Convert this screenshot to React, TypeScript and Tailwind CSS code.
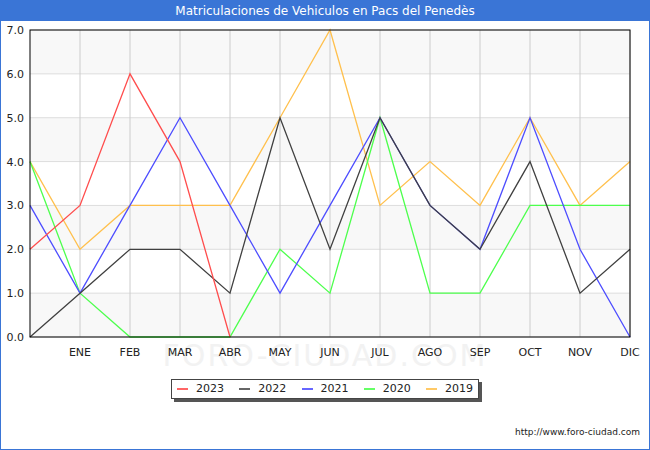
const months = ["ENE", "FEB", "MAR", "ABR", "MAY", "JUN", "JUL", "AGO", "SEP", "OCT", "NOV", "DIC"];

const series = [
  { name: "2019", color: "#ffc04d", data: [4, 2, 3, 3, 3, 5, 7, 3, 4, 3, 5, 3, 4] },
  { name: "2020", color: "#4dff4d", data: [4, 1, 0, 0, 0, 2, 1, 5, 1, 1, 3, 3, 3] },
  { name: "2021", color: "#4d4dff", data: [3, 1, 3, 5, 3, 1, 3, 5, 3, 2, 5, 2, 0] },
  { name: "2022", color: "#404040", data: [0, 1, 2, 2, 1, 5, 2, 5, 3, 2, 4, 1, 2] },
  { name: "2023", color: "#ff4d4d", data: [2, 3, 6, 4, 0] },
];

const legend = [
  { name: "2023", color: "#ff6666" },
  { name: "2022", color: "#666666" },
  { name: "2021", color: "#6666ff" },
  { name: "2020", color: "#66ff66" },
  { name: "2019", color: "#ffc966" },
];

const X0 = 30, X1 = 630, Y0 = 30, Y1 = 337;
const sx = (i: number) => X0 + i * 50;
const sy = (v: number) => Y1 - (v * (Y1 - Y0)) / 7;

function Chart() {
  return (
    <svg width="650" height="372" className="absolute left-0 top-0" style={{ fontFamily: "DejaVu Sans, sans-serif" }}>
      {[0, 1, 2, 3, 4, 5, 6].map((k) =>
        k % 2 === 0 ? (
          <rect key={k} x={X0} y={sy(7 - k)} width={X1 - X0} height={(Y1 - Y0) / 7} fill="#f8f8f8" />
        ) : null
      )}
      <text x="325" y="366" fontSize="30" textAnchor="middle" fill="#f2f2f2" letterSpacing="2">FORO-CIUDAD.COM</text>
      {[0, 1, 2, 3, 4, 5, 6, 7].map((v) => (
        <g key={v}>
          <line x1={X0} x2={X1} y1={sy(v)} y2={sy(v)} stroke="#dddddd" />
          <text x={24} y={sy(v) + 4} fontSize="11" textAnchor="end" fill="#222">{v.toFixed(1)}</text>
        </g>
      ))}
      {months.map((m, i) => (
        <g key={m}>
          <line x1={sx(i + 1)} x2={sx(i + 1)} y1={Y0} y2={Y1} stroke="#cccccc" />
          <text x={sx(i + 1)} y={356} fontSize="11" textAnchor="middle" fill="#222">{m}</text>
        </g>
      ))}
      {series.map((s) => (
        <polyline
          key={s.name}
          fill="none"
          stroke={s.color}
          strokeWidth="1.3"
          points={s.data.map((v, i) => `${sx(i)},${sy(v)}`).join(" ")}
        />
      ))}
      <rect x={X0} y={Y0} width={X1 - X0} height={Y1 - Y0} fill="none" stroke="#000" />
    </svg>
  );
}

export default function App() {
  return (
    <div className="w-[650px] h-[450px] bg-white border border-[#3a75d6] flex flex-col" style={{ fontFamily: "DejaVu Sans, sans-serif" }}>
      <div className="h-[20px] bg-[#3a75d6] text-white text-[12px] flex items-center justify-center">
        Matriculaciones de Vehiculos en Pacs del Penedès
      </div>
      <div className="relative h-[358px]">
        <div className="absolute -top-[21px] -left-px">
          <Chart />
        </div>
      </div>
      <div className="flex justify-center">
        <div className="flex items-center justify-between border border-[#444] h-[20px] px-[5px] w-[308px] shadow-[3px_3px_0_#555] text-[11px] text-[#222] bg-white">
          {legend.map((l) => (
            <div key={l.name} className="flex items-center gap-[8px]">
              <span className="w-[11px] h-[2px]" style={{ background: l.color }} />
              <span>{l.name}</span>
            </div>
          ))}
        </div>
      </div>
      <div className="flex-1 flex items-end justify-end pr-[9px] pb-[10px] text-[9px] text-[#222]">
        http://www.foro-ciudad.com
      </div>
    </div>
  );
}
